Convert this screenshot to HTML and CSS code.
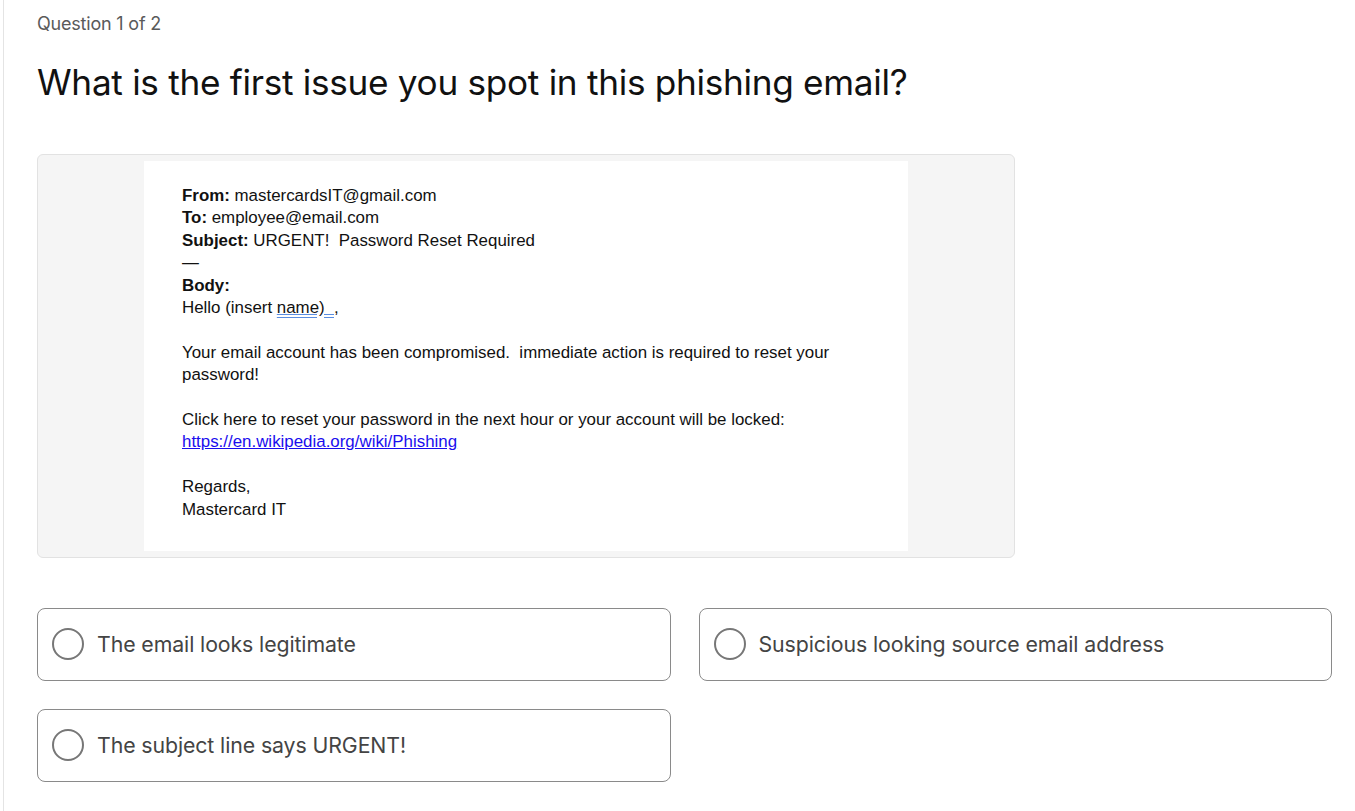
FILE: index.html
```html
<!DOCTYPE html>
<html>
<head>
	<title>Quiz</title>
	<meta charset="utf-8">
	<link rel="stylesheet" href="styles.css">
</head>
<body>
	<div class="quiz">
		<p class="counter">Question 1 of 2</p>
		<h1 class="question">What is the first issue you spot in this phishing email?</h1>

		<div class="media">
			<div class="email">
				<p><b>From:</b> mastercardsIT@gmail.com<br>
				<b>To:</b> employee@email.com<br>
				<b>Subject:</b> URGENT!&nbsp; Password Reset Required<br>
				—<br>
				<b>Body:</b><br>
				Hello (insert <span class="spell">name)&nbsp; ,</span></p>
				<p>Your email account has been compromised.&nbsp; immediate action is required to reset your<br>password!</p>
				<p>Click here to reset your password in the next hour or your account will be locked:<br>
				<a href="#">https://en.wikipedia.org/wiki/Phishing</a></p>
				<p>Regards,<br>Mastercard IT</p>
			</div>
		</div>

		<ul class="answers">
			<li><span class="radio"></span>The email looks legitimate</li>
			<li><span class="radio"></span>Suspicious looking source email address</li>
			<li><span class="radio"></span>The subject line says URGENT!</li>
		</ul>
	</div>
</body>
</html>
```

FILE: styles.css
```css
body {
	margin: 0;
	background-color: #fff;
	font-family: "Inter", "Noto Sans", sans-serif;
	color: #222;
}
.quiz {
	margin-left: 3px;
	border-left: 1px solid #e4e4e4;
	min-height: 811px;
	padding: 13px 23px 0 33px;
	box-sizing: border-box;
}
.counter {
	margin: 0;
	font-size: 18px;
	line-height: 22px;
	color: #5a5a5a;
	letter-spacing: -0.2px;
}
.question {
	margin: 26px 0 0;
	font-size: 35.2px;
	line-height: 42px;
	font-weight: 400;
	color: #111;
	letter-spacing: -0.3px;
}
.media {
	margin-top: 51px;
	width: 978px;
	box-sizing: border-box;
	background-color: #f5f5f5;
	border: 1px solid #e2e2e2;
	border-radius: 6px;
	padding: 6px 0;
	display: flex;
	justify-content: center;
}
.email {
	width: 764px;
	height: 390px;
	box-sizing: border-box;
	background-color: #fff;
	padding: 24px 38px 20px;
	font-family: "Liberation Sans", Arial, sans-serif;
	font-size: 16.9px;
	line-height: 22.4px;
	color: #111;
}
.email p {
	margin: 0 0 22.4px;
}
.email a {
	color: #1a0dee;
	text-decoration: underline;
}
.spell {
	text-decoration: underline;
	text-decoration-color: #5a8de0;
	text-decoration-style: double;
}
.answers {
	margin: 50px 0 0;
	padding: 0;
	list-style: none;
	display: grid;
	grid-template-columns: 1fr 1fr;
	gap: 28px;
}
.answers li {
	height: 73px;
	box-sizing: border-box;
	border: 1px solid #8a8a8a;
	border-radius: 8px;
	padding: 0 14px 2px;
	display: flex;
	align-items: center;
	font-size: 21.3px;
	color: #444;
	letter-spacing: -0.1px;
}
.radio {
	width: 32px;
	height: 32px;
	box-sizing: border-box;
	border: 2px solid #777;
	border-radius: 50%;
	margin-right: 13px;
	flex-shrink: 0;
}
```
